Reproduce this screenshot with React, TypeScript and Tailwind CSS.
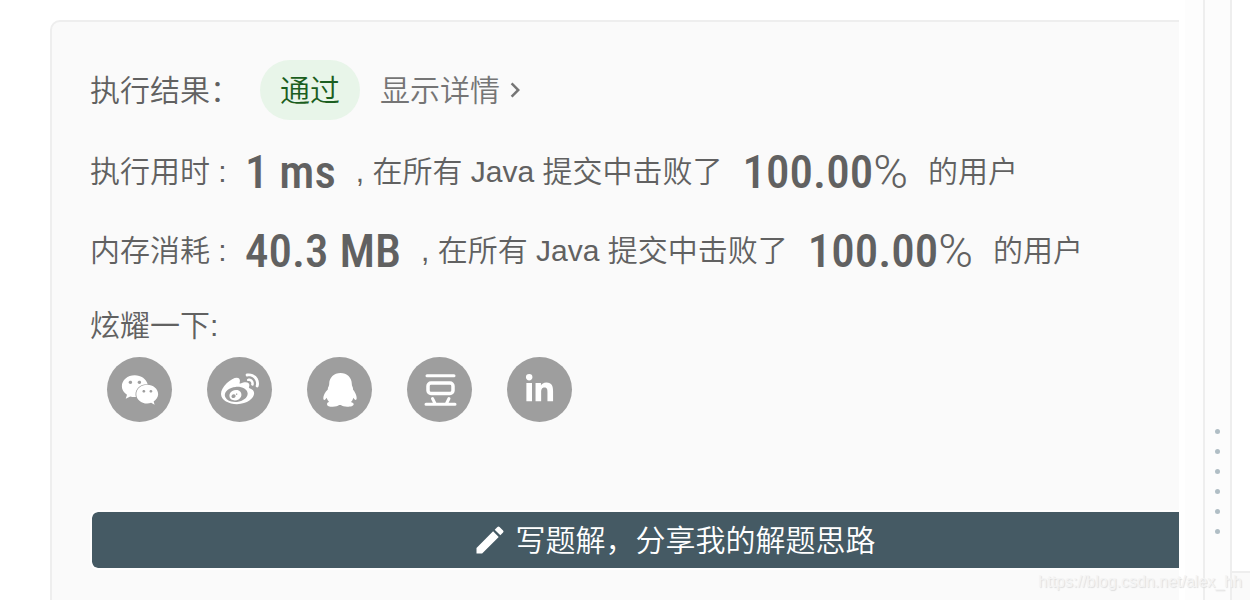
import type { ReactNode } from 'react';
import { FaLinkedinIn, FaWeibo, FaWeixin } from 'react-icons/fa';
import { MdChevronRight, MdEdit } from 'react-icons/md';

interface StatRowProps {
  label: string;
  value: string;
  percent: string;
}

function StatRow({ label, value, percent }: StatRowProps) {
  return (
    <div className="mt-6 flex h-[55px] items-center whitespace-pre">
      <span>{label} : </span>
      <span className="ml-[10px] font-['Roboto_Condensed','Roboto',sans-serif] text-[47px] leading-none font-medium">{value}</span>
      <span className="ml-5">, 在所有 Java 提交中击败了</span>
      <span className="ml-5 font-['Roboto_Condensed','Roboto',sans-serif] text-[47px] leading-none font-medium">{percent}</span>
      <span className="font-['Roboto',sans-serif] text-[47px] leading-none font-light">%</span>
      <span className="ml-5">的用户</span>
    </div>
  );
}

function PenguinIcon() {
  return (
    <svg viewBox="0 0 34 34" className="h-[34px] w-[34px]" fill="currentColor">
      <path d="M17.5 0C24 0 28.8 4.6 28.8 10.8c0 1 .1 1.8.6 2.6.6 1 .7 2 .6 3 2 2.6 3.7 5.8 3.7 8.7 0 1.2-.5 2-1 2-.9 0-1.700-1.500-2.300-2.300-.5 1.700-1.400 3.200-2.500 4.300 1.800.5 2.800 1.200 2.800 2.200 0 1.700-3 2.500-6.500 2.500-2.800 0-5-.6-6.300-1.700h-1.800c-1.300 1.100-3.500 1.700-6.300 1.700-3.500 0-5.800-.8-5.800-2.600 0-1 .6-1.800 2.100-2.200-1.100-1.100-2-2.500-2.500-4.200-.8 1-1.400 2.300-2.200 2.300C.6 27.100.3 26.300.3 25.100c0-3 1.800-6.200 4.500-8.700-.1-1.200.2-2.200.9-3.100.4-.8.5-1.600.5-2.500C6.200 4.600 11 0 17.500 0z" />
    </svg>
  );
}

function DoubanIcon() {
  return (
    <svg viewBox="0 0 34 34" className="h-[34px] w-[34px]" fill="none" stroke="currentColor" strokeWidth="3" strokeLinecap="round">
      <path d="M4 2.700h27M3 31.300h29M9.500 25.500l2.500 5M26 25.500l-2.500 5" />
      <rect x="5" y="10" width="25" height="10.500" rx="3" strokeWidth="3.500" />
    </svg>
  );
}

const shares: { name: string; icon: ReactNode }[] = [
  { name: '微信', icon: <FaWeixin className="h-9 w-[38px]" /> },
  { name: '微博', icon: <FaWeibo className="h-[38px] w-[38px]" /> },
  { name: 'QQ', icon: <PenguinIcon /> },
  { name: '豆瓣', icon: <DoubanIcon /> },
  { name: 'LinkedIn', icon: <FaLinkedinIn className="h-[31px] w-[31px]" /> },
];

function ResultCard() {
  return (
    <section className="-mr-[118px] h-[640px] rounded-[10px] border-2 border-[#eeeeee] bg-[#fafafa] p-[38px]">
      <div className="flex h-[60px] items-center">
        <span>执行结果：</span>
        <span className="ml-5 flex h-[60px] items-center rounded-full bg-[#e8f5e9] px-5 text-[#1b5e20]">通过</span>
        <a href="#detail" className="ml-5 flex items-center text-[#757575]">
          显示详情
          <MdChevronRight />
        </a>
      </div>

      <StatRow label="执行用时" value="1 ms" percent="100.00" />
      <StatRow label="内存消耗" value="40.3 MB" percent="100.00" />

      <div className="mt-7 h-10 leading-10">炫耀一下:</div>
      <div className="mt-[11px] ml-[17px] flex gap-[35px]">
        {shares.map(({ name, icon }) => (
          <button
            key={name}
            aria-label={name}
            className="flex h-[65px] w-[65px] items-center justify-center rounded-full bg-[#9e9e9e] text-white"
          >
            {icon}
          </button>
        ))}
      </div>

      <button className="mt-[88px] flex h-[60px] w-full items-center justify-center gap-2 rounded-lg border-2 border-white bg-[#455a64] bg-clip-padding text-white">
        <MdEdit className="text-4xl" />
        写题解，分享我的解题思路
      </button>
    </section>
  );
}

function Splitter() {
  return (
    <div className="flex w-[29px] shrink-0 flex-col items-center gap-[15px] border-x-2 border-[#eeeeee] bg-[#fcfcfc] pt-[429px]">
      {[0, 1, 2, 3, 4, 5].map((i) => (
        <span key={i} className="h-[5px] w-[5px] shrink-0 rounded-full bg-[#b0bec5]" />
      ))}
    </div>
  );
}

export default function App() {
  return (
    <div className="relative flex h-screen overflow-hidden bg-white font-['Liberation_Sans','Noto_Sans_CJK_SC',sans-serif] text-[30px] font-[350] text-[#616161]">
      <main className="min-w-0 flex-1 overflow-hidden pt-5 pl-[50px]">
        <ResultCard />
      </main>
      <div className="w-6 shrink-0 border-l-[6px] border-white bg-[#fdfdfd]" />
      <Splitter />
      <aside className="flex w-[18px] shrink-0 flex-col">
        <div className="flex-1" />
        <div className="h-[29px] border-t-2 border-[#eeeeee] bg-[#fafafa]" />
      </aside>
      <span className="absolute right-2 bottom-2 text-base leading-5 text-[#f4f4f4] [text-shadow:1px_1px_1px_#dddddd]">
        https://blog.csdn.net/alex_hh
      </span>
    </div>
  );
}
